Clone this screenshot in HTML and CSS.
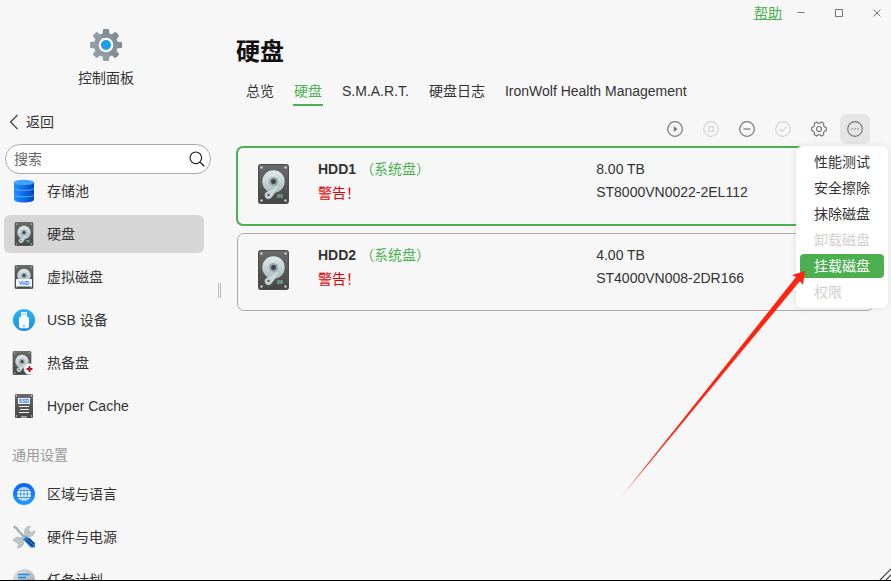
FILE: index.html
```html
<!DOCTYPE html>
<html lang="zh-CN">
<head>
    <meta charset="UTF-8">
    <meta name="viewport" content="width=device-width, initial-scale=1.0">
    <title>控制面板</title>
    <link rel="stylesheet" href="styles.css">
</head>
<body>
    <!-- shared drawings -->
    <svg class="defs" aria-hidden="true">
        <defs>
            <linearGradient id="g-body" x1="0" y1="0" x2="0" y2="1"><stop offset="0" stop-color="#6a6a6a"/><stop offset="1" stop-color="#464646"/></linearGradient>
            <linearGradient id="g-disc" x1="0" y1="0" x2="0" y2="1"><stop offset="0" stop-color="#e0eaec"/><stop offset="1" stop-color="#a9bcc0"/></linearGradient>
            <linearGradient id="g-gear" x1="0" y1="0" x2="0" y2="1"><stop offset="0" stop-color="#7d8b98"/><stop offset="1" stop-color="#93a0aa"/></linearGradient>
            <linearGradient id="g-pool" x1="0" y1="0" x2="1" y2="0"><stop offset="0" stop-color="#1d93ff"/><stop offset="0.45" stop-color="#0f6fe8"/><stop offset="1" stop-color="#0048b8"/></linearGradient>
            <linearGradient id="g-usb" x1="0" y1="0" x2="0" y2="1"><stop offset="0" stop-color="#2bb8ef"/><stop offset="1" stop-color="#1a8fe0"/></linearGradient>
            <linearGradient id="g-globe" x1="0" y1="0" x2="0" y2="1"><stop offset="0" stop-color="#0a63f5"/><stop offset="1" stop-color="#1f9bff"/></linearGradient>
            <linearGradient id="g-task" x1="0" y1="0" x2="1" y2="1"><stop offset="0" stop-color="#e4e6e8"/><stop offset="1" stop-color="#9a9fa5"/></linearGradient>
            <linearGradient id="g-tail" gradientUnits="userSpaceOnUse" x1="617" y1="502" x2="645" y2="468"><stop offset="0" stop-color="#ff2412" stop-opacity="0.4"/><stop offset="1" stop-color="#ff2412"/></linearGradient>
        </defs>
        <symbol id="hdd" viewBox="0 0 31 40">
            <rect x="0.5" y="0.5" width="30" height="39" rx="2" fill="url(#g-body)" stroke="#4c4c4c"/>
            <g fill="#c9d2d4"><circle cx="3.5" cy="3.5" r="1.2"/><circle cx="27.5" cy="3.5" r="1.2"/><circle cx="3.5" cy="36.5" r="1.2"/><circle cx="27.5" cy="36.5" r="1.2"/></g>
            <circle cx="15.5" cy="17.5" r="11.2" fill="url(#g-disc)"/>
            <circle cx="15.5" cy="17.5" r="4.6" fill="#98a5a9"/>
            <circle cx="15.5" cy="17.5" r="2.5" fill="#3e4649"/>
            <path d="M19.8 20.8L22 22.2L14 32.8a3.8 3.8 0 1 1-5.8-4.6z" fill="#c8d6da" stroke="#93a2a6" stroke-width="0.5"/>
            <circle cx="10.5" cy="31" r="1.3" fill="#59686c"/>
            <rect x="19" y="30" width="6" height="4" rx="0.5" fill="#5f9180"/>
        </symbol>
    </svg>

    <div class="window">
        <aside class="sidebar">
            <div class="app">
                <svg class="app-icon" viewBox="0 0 32 32">
                    <g fill="url(#g-gear)">
                        <circle cx="16" cy="16" r="12"/>
                        <path id="tooth" d="M12.5 6L13 0.8Q13.1 0 14 0H18Q18.9 0 19 0.8L19.5 6V26L19 31.2Q18.9 32 18 32H14Q13.1 32 13 31.2L12.5 26z"/>
                        <use href="#tooth" transform="rotate(45 16 16)"/>
                        <use href="#tooth" transform="rotate(90 16 16)"/>
                        <use href="#tooth" transform="rotate(135 16 16)"/>
                    </g>
                    <circle cx="16" cy="16" r="7.3" fill="#fff"/>
                    <circle cx="16" cy="16" r="5" fill="#1ba0e8"/>
                </svg>
                <span>控制面板</span>
            </div>
            <button class="back" type="button">
                <svg width="10" height="16" viewBox="0 0 10 16"><path d="M9.5 1L2.5 8L9.5 15" fill="none" stroke="#333" stroke-width="1.1"/></svg>
                返回
            </button>
            <div class="search">
                <input type="text" placeholder="搜索" aria-label="搜索">
                <svg width="16" height="16" viewBox="0 0 16 16"><circle cx="6.8" cy="6.8" r="5.8" fill="none" stroke="#222" stroke-width="1.2"/><path d="M11 11L15.3 15.3" stroke="#222" stroke-width="1.3"/></svg>
            </div>
            <nav class="menu">
                <a class="menu-item" href="#">
                    <svg class="menu-icon" viewBox="0 0 24 24">
                        <path d="M2 3.5V20.5C2 22.5 6.5 23.5 12 23.5S22 22.5 22 20.5V3.5z" fill="url(#g-pool)"/>
                        <ellipse cx="12" cy="3.5" rx="10" ry="2.7" fill="#3fa4ff"/>
                        <path d="M2 9.5C4 12 20 12 22 9.5M2 16C4 18.5 20 18.5 22 16" fill="none" stroke="#64b0ff" stroke-width="0.9"/>
                    </svg>
                    存储池
                </a>
                <a class="menu-item active" href="#">
                    <svg class="menu-icon" viewBox="0 0 24 24"><use href="#hdd" x="2" y="0" width="20" height="24"/></svg>
                    硬盘
                </a>
                <a class="menu-item" href="#">
                    <svg class="menu-icon" viewBox="0 0 24 24">
                        <use href="#hdd" x="2" y="0" width="20" height="24"/>
                        <rect x="4" y="14" width="16" height="7.5" rx="1" fill="#f5faff"/>
                        <text class="tag" x="12" y="20" text-anchor="middle">VHD</text>
                    </svg>
                    虚拟磁盘
                </a>
                <a class="menu-item" href="#">
                    <svg class="menu-icon" viewBox="0 0 24 24">
                        <circle cx="12" cy="12" r="11" fill="url(#g-usb)"/>
                        <rect x="9" y="4" width="6" height="5" fill="#fff"/>
                        <path d="M10.2 5.5h1.2v1.2h-1.2zM12.7 5.5h1.2v1.2h-1.2z" fill="#269fe0"/>
                        <path d="M8 9h8a1 1 0 0 1 1 1v8.5a1.8 1.8 0 0 1-1.8 1.8H8.8A1.8 1.8 0 0 1 7 18.5V10a1 1 0 0 1 1-1z" fill="#f6fbff"/>
                        <rect x="11" y="17.5" width="2" height="1.5" fill="#5fc0f0"/>
                    </svg>
                    USB 设备
                </a>
                <a class="menu-item" href="#">
                    <svg class="menu-icon" viewBox="0 0 24 24">
                        <use href="#hdd" x="0" y="0" width="20" height="24"/>
                        <circle cx="17.5" cy="18" r="5.5" fill="#fff" stroke="#ddd" stroke-width="0.5"/>
                        <path d="M17.5 15V21M14.5 18H20.5" stroke="#c4101c" stroke-width="2"/>
                    </svg>
                    热备盘
                </a>
                <a class="menu-item" href="#">
                    <svg class="menu-icon" viewBox="0 0 24 24">
                        <rect x="3" y="0" width="18" height="24" rx="1" fill="url(#g-body)"/>
                        <g fill="#ddd"><circle cx="4.6" cy="1.8" r="0.7"/><circle cx="19.4" cy="1.8" r="0.7"/><circle cx="4.6" cy="22" r="0.7"/><circle cx="19.4" cy="22" r="0.7"/></g>
                        <rect x="6" y="4" width="12" height="6" fill="#f3f8ff"/>
                        <text class="tag" x="12" y="9" text-anchor="middle">SSD</text>
                        <path d="M7 12.5H17M8 15.5H17M7 18.5H17M9 23H15" stroke="#eee"/>
                    </svg>
                    Hyper Cache
                </a>
                <h2 class="menu-label">通用设置</h2>
                <a class="menu-item" href="#">
                    <svg class="menu-icon" viewBox="0 0 24 24">
                        <circle cx="12" cy="12" r="11" fill="url(#g-globe)"/>
                        <circle cx="12" cy="12" r="7" fill="#fff"/>
                        <path d="M12 5V19M5 12H19M6 8.5H18M6 15.5H18M9.5 5.5Q7.5 12 9.5 18.5M14.5 5.5Q16.5 12 14.5 18.5" fill="none" stroke="#1a80fb" stroke-width="0.8"/>
                    </svg>
                    区域与语言
                </a>
                <a class="menu-item" href="#">
                    <svg class="menu-icon" viewBox="0 0 24 24">
                        <path d="M5.5 18.5L18 6" stroke="#bcc6cc" stroke-width="4"/>
                        <path d="M18.5 1.2L16 5L16.5 7.5L19 8L22.8 5.5A5.6 5.6 0 0 1 16 11.5L12.5 8A5.6 5.6 0 0 1 18.5 1.2z" fill="#bcc6cc" stroke="#98a4ab" stroke-width="0.5"/>
                        <path d="M1 15.5L5 17.5L6.5 19.5L5.5 23A5.6 5.6 0 0 0 11.5 16L8 12.5A5.6 5.6 0 0 0 1 15.5z" fill="#bcc6cc" stroke="#98a4ab" stroke-width="0.5"/>
                        <path d="M1.5 1.5L5 3.5L6.5 6L13 12.5" stroke="#a3aeb6" stroke-width="2.4" fill="none"/>
                        <path d="M11 14.5L14.5 11L23 18.5V22.5H18.5z" fill="#2b86d6"/>
                        <path d="M14 14.5L21 21.5M16.5 13L22.5 19" stroke="#0c3a80" stroke-width="1.6"/>
                    </svg>
                    硬件与电源
                </a>
                <a class="menu-item" href="#">
                    <svg class="menu-icon" viewBox="0 0 24 24">
                        <circle cx="12" cy="12" r="11" fill="url(#g-task)"/>
                        <path d="M6 6.5H17.5M6 9.5H14M6 12.5H17.5" stroke="#1287e8" stroke-width="1.6"/>
                    </svg>
                    任务计划
                </a>
            </nav>
        </aside>

        <div class="splitter"></div>

        <main class="content">
            <header class="titlebar">
                <a class="help" href="#">帮助</a>
                <button class="win-btn" type="button" aria-label="最小化"><svg width="8" height="8" viewBox="0 0 8 8"><path d="M0.5 3.5H7.5"/></svg></button>
                <button class="win-btn" type="button" aria-label="最大化"><svg width="8" height="8" viewBox="0 0 8 8"><path d="M0.5 0.5H7.5V7.5H0.5z"/></svg></button>
                <button class="win-btn" type="button" aria-label="关闭"><svg width="8" height="8" viewBox="0 0 8 8"><path d="M0.5 0.5L7.5 7.5M7.5 0.5L0.5 7.5"/></svg></button>
            </header>
            <h1>硬盘</h1>
            <nav class="tabs">
                <a class="tab" href="#">总览</a>
                <a class="tab active" href="#">硬盘</a>
                <a class="tab" href="#">S.M.A.R.T.</a>
                <a class="tab" href="#">硬盘日志</a>
                <a class="tab" href="#">IronWolf Health Management</a>
            </nav>
            <div class="toolbar">
                <button class="tool" type="button" aria-label="启动"><svg viewBox="0 0 16 16"><circle cx="8" cy="8" r="7.3"/><path class="solid" d="M6.8 5L10.5 8L6.8 11z"/></svg></button>
                <button class="tool" type="button" aria-label="停止" disabled><svg viewBox="0 0 16 16"><circle cx="8" cy="8" r="7.3"/><rect x="5.8" y="5.8" width="4.4" height="4.4"/></svg></button>
                <button class="tool" type="button" aria-label="移除"><svg viewBox="0 0 16 16"><circle cx="8" cy="8" r="7.3"/><path d="M4.5 8H11.5"/></svg></button>
                <button class="tool" type="button" aria-label="确认" disabled><svg viewBox="0 0 16 16"><circle cx="8" cy="8" r="7.3"/><path d="M4.5 8L7 10.5L11.5 5.8"/></svg></button>
                <button class="tool" type="button" aria-label="设置"><svg viewBox="0 0 16 16"><path d="M5.6 1L7 2.2H9L10.4 1L12.7 2.3L12.5 4.2L13.5 5.9L15.3 6.7V9.3L13.5 10.1L12.5 11.8L12.7 13.7L10.4 15L9 13.8H7L5.6 15L3.3 13.7L3.5 11.8L2.5 10.1L0.7 9.3V6.7L2.5 5.9L3.5 4.2L3.3 2.3z"/><circle cx="8" cy="8" r="2.5"/></svg></button>
                <div class="more">
                    <button class="tool open" type="button" aria-label="更多"><svg viewBox="0 0 16 16"><circle cx="8" cy="8" r="7.3"/><path d="M4.2 8H5.8M7.2 8H8.8M10.2 8H11.8"/></svg></button>
                    <div class="dropdown">
                        <button type="button">性能测试</button>
                        <button type="button">安全擦除</button>
                        <button type="button">抹除磁盘</button>
                        <button type="button" disabled>卸载磁盘</button>
                        <button type="button" class="active">挂载磁盘</button>
                        <button type="button" disabled>权限</button>
                    </div>
                </div>
            </div>
            <section class="disks">
                <article class="disk selected">
                    <svg class="disk-icon" viewBox="0 0 31 40"><use href="#hdd"/></svg>
                    <div class="disk-info">
                        <div><strong>HDD1</strong><span class="system">（系统盘）</span></div>
                        <div class="warning">警告！</div>
                    </div>
                    <div class="disk-model">
                        <div>8.00 TB</div>
                        <div>ST8000VN0022-2EL112</div>
                    </div>
                </article>
                <article class="disk">
                    <svg class="disk-icon" viewBox="0 0 31 40"><use href="#hdd"/></svg>
                    <div class="disk-info">
                        <div><strong>HDD2</strong><span class="system">（系统盘）</span></div>
                        <div class="warning">警告！</div>
                    </div>
                    <div class="disk-model">
                        <div>4.00 TB</div>
                        <div>ST4000VN008-2DR166</div>
                    </div>
                </article>
            </section>
        </main>
        <svg class="arrow" width="891" height="581" viewBox="0 0 891 581">
            <path d="M617 502L796 277L792 275L805 271L803 285L800 281z" fill="url(#g-tail)"/>
        </svg>
        <svg class="grip" width="12" height="12" viewBox="0 0 12 12"><path d="M1 12L12 1M7 12L12 7" stroke="#444" stroke-width="1.2"/></svg>
    </div>
</body>
</html>
```
FILE: styles.css
```css
* {
    box-sizing: border-box;
}

body {
    margin: 0;
    background-color: #f7f7f7;
    color: #333;
    font-family: "Liberation Sans", "Noto Sans CJK SC", sans-serif;
    font-size: 14px;
    line-height: 20px;
}

a {
    color: inherit;
    text-decoration: none;
}

button {
    border: none;
    padding: 0;
    background: none;
    color: inherit;
    font: inherit;
    cursor: pointer;
}

svg {
    display: block;
    flex-shrink: 0;
}

.defs {
    position: absolute;
    width: 0;
    height: 0;
}

.window {
    position: relative;
    display: flex;
    height: 100vh;
    border-bottom: 1px solid #000;
    overflow: hidden;
}

/* sidebar */
.sidebar {
    display: flex;
    flex-direction: column;
    width: 218px;
    flex-shrink: 0;
    padding: 29px 7px 0 4px;
}

.app {
    display: flex;
    flex-direction: column;
    align-items: center;
    gap: 7px;
    padding-right: 3px;
}

.app-icon {
    width: 32px;
    height: 32px;
}

.back {
    display: flex;
    align-items: center;
    gap: 8px;
    height: 20px;
    margin-top: 24px;
    padding-left: 4px;
}

.search {
    display: flex;
    align-items: center;
    height: 30px;
    margin: 12px 0 -2px 1px;
    padding: 0 5px 0 8px;
    border: 1px solid #aaa;
    border-radius: 15px;
    background-color: #fff;
    z-index: 1;
}

.search input {
    flex: 1;
    min-width: 0;
    border: none;
    padding: 0;
    outline: none;
    background: none;
    color: #333;
    font: inherit;
}

.search input::placeholder {
    color: #666;
    opacity: 1;
}

.menu {
    display: flex;
    flex-direction: column;
    gap: 5px;
    flex: 1;
    min-height: 0;
    overflow: hidden;
}

.menu-item {
    display: flex;
    align-items: center;
    flex-shrink: 0;
    gap: 11px;
    width: 200px;
    height: 38px;
    padding-left: 8px;
    border-radius: 6px;
}

.menu-item.active {
    background-color: #d6d6d6;
}

.menu-icon {
    width: 24px;
    height: 24px;
}

.tag {
    fill: #1673f0;
    font-size: 5px;
    font-weight: bold;
}

.menu-label {
    flex-shrink: 0;
    height: 40px;
    margin: 0;
    padding: 15px 0 0 8px;
    color: #999;
    font-size: 14px;
    font-weight: normal;
}

.splitter {
    align-self: center;
    width: 3px;
    height: 15px;
    border: 1px solid #bbb;
    border-width: 0 1px;
}

/* content */
.content {
    flex: 1;
    min-width: 0;
    padding: 0 16px 0 15px;
}

.titlebar {
    display: flex;
    justify-content: flex-end;
    align-items: center;
    height: 26px;
    margin-right: -6px;
}

.help {
    color: #4caf50;
    text-decoration: underline;
}

.win-btn {
    margin-left: 30px;
}

.help + .win-btn {
    margin-left: 15px;
}

.win-btn path {
    fill: none;
    stroke: #777;
}

h1 {
    margin: 8px 0 0;
    color: #111;
    font-size: 24px;
    line-height: 36px;
}

.tabs {
    display: flex;
    gap: 18px;
    margin: 10px 0 0 9px;
}

.tab {
    height: 26px;
    padding: 1px 1px 0;
}

.tab.active {
    border-bottom: 2px solid #4caf50;
    color: #4caf50;
}

.toolbar {
    display: flex;
    justify-content: flex-end;
    gap: 6px;
    margin: 8px 5px 2px 0;
}

.tool {
    display: flex;
    justify-content: center;
    align-items: center;
    width: 30px;
    height: 30px;
    border-radius: 6px;
    color: #777;
}

.tool svg {
    width: 16px;
    height: 16px;
    fill: none;
    stroke: currentColor;
    stroke-width: 1.2px;
}

.tool .solid {
    fill: currentColor;
    stroke: none;
}

.tool:disabled {
    color: #d2d2ce;
}

.tool.open {
    background-color: #e5e5e5;
}

.more {
    position: relative;
}

.dropdown {
    position: absolute;
    top: 32px;
    right: -18px;
    z-index: 2;
    display: flex;
    flex-direction: column;
    gap: 2px;
    width: 92px;
    padding: 4px;
    border-radius: 6px;
    background-color: #fff;
    box-shadow: 0 0 6px rgba(0, 0, 0, 0.1);
}

.dropdown button {
    height: 24px;
    padding-left: 14px;
    border-radius: 4px;
    text-align: left;
}

.dropdown button:disabled {
    color: #d2d0cc;
}

.dropdown .active {
    background-color: #4caf50;
    color: #fff;
}

.disks {
    display: flex;
    flex-direction: column;
    gap: 6px;
}

.disk {
    display: grid;
    grid-template-columns: 60px 52fr 48fr;
    margin: 1px;
    padding: 11px 20px 20px;
    border: 1px solid #aaa;
    border-radius: 7px;
}

.disk.selected {
    margin: 0;
    border: 2px solid #4caf50;
}

.disk-icon {
    width: 31px;
    height: 40px;
    margin-top: 5px;
}

.disk-info,
.disk-model {
    display: flex;
    flex-direction: column;
    gap: 4px;
}

.disk-model {
    gap: 3px;
}

.system {
    margin-left: 4px;
    color: #4caf50;
}

.warning {
    color: #e60000;
}

/* pointer and resize grip over the window */
.arrow {
    position: absolute;
    top: 0;
    left: 0;
    z-index: 3;
    pointer-events: none;
}

.grip {
    position: absolute;
    right: 0;
    bottom: 0;
}
```
